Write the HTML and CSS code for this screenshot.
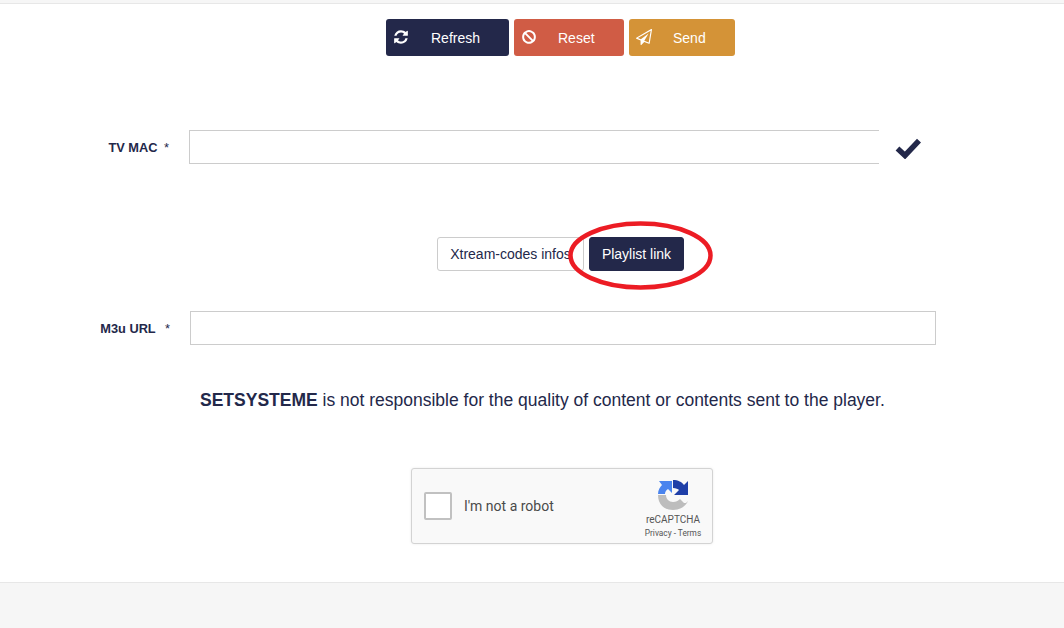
FILE: index.html
```html
<!DOCTYPE html>
<html lang="en">
<head>
  <meta charset="UTF-8" />
  <title>Upload playlist - SETSYSTEME</title>
  <link rel="stylesheet" href="styles.css">
</head>
<body>

  <div class="top-strip"></div>

  <main class="content">
    <div class="actions">
      <button type="button" class="btn btn-refresh">
        <svg class="btn-icon" viewBox="0 0 1792 1792"><path d="M1639 1056q0 5-1 7-64 268-268 434.500t-478 166.500q-146 0-282.500-55t-243.500-157l-129 129q-19 19-45 19t-45-19-19-45v-448q0-26 19-45t45-19h448q26 0 45 19t19 45-19 45l-137 137q71 66 161 102t187 36q134 0 250-65t186-179q11-17 53-117 8-23 30-23h192q13 0 22.500 9.500t9.500 22.500zm25-800v448q0 26-19 45t-45 19h-448q-26 0-45-19t-19-45 19-45l138-138q-148-137-349-137-134 0-250 65t-186 179q-11 17-53 117-8 23-30 23h-199q-13 0-22.500-9.500t-9.500-22.500v-7q65-268 270-434.500t480-166.500q146 0 284 55.500t245 156.500l130-129q19-19 45-19t45 19 19 45z"/></svg>
        Refresh
      </button>
      <button type="button" class="btn btn-reset">
        <svg class="btn-icon" viewBox="0 0 1792 1792"><path d="M1440 893q0-161-87-295l-754 753q137 89 297 89 111 0 211.500-43.500t173.500-116.500 116-174.500 43-212.500zm-999 299l755-754q-135-91-300-91-148 0-273 73t-198 199-73 274q0 162 89 299zm1223-299q0 157-61 300t-163.500 246-245 164-298.500 61-298.500-61-245-164-163.500-246-61-300 61-299.500 163.500-245.500 245-164 298.500-61 298.500 61 245 164 163.500 245.500 61 299.500z"/></svg>
        Reset
      </button>
      <button type="button" class="btn btn-send">
        <svg class="btn-icon" viewBox="0 0 1792 1792"><path d="M1764 11q33 24 27 64l-256 1536q-5 29-32 45-14 8-31 8-11 0-24-5l-527-215-298 327q-18 21-47 21-14 0-23-4-19-7-30-23.500t-11-36.500v-452l-472-193q-37-14-40-55-3-39 32-59l1664-960q35-21 68 2zm-342 1499l221-1323-1434 827 336 137 863-639-478 797z"/></svg>
        Send
      </button>
    </div>

    <div class="field field-mac">
      <label for="mac">TV MAC <span class="req">*</span></label>
      <input type="text" id="mac">
      <svg class="check" viewBox="0 0 26 21"><path d="M2.500 10.500L10 17.500L24 2.700"/></svg>
    </div>

    <div class="tabs">
      <button type="button" class="tab">Xtream-codes infos</button>
      <button type="button" class="tab tab-active">Playlist link</button>
      <svg class="circled" viewBox="0 0 146 70"><ellipse cx="72.500" cy="34.500" rx="70" ry="32"/></svg>
    </div>

    <div class="field field-url">
      <label for="url">M3u URL <span class="req">*</span></label>
      <input type="text" id="url">
    </div>

    <p class="notice"><strong>SETSYSTEME</strong> is not responsible for the quality of content or contents sent to the player.</p>

    <div class="captcha">
      <span class="captcha-box"></span>
      <span class="captcha-text">I'm not a robot</span>
      <div class="captcha-brand">
        <svg class="captcha-logo" viewBox="0 0 30 30">
          <path class="arc-grey" d="M0 15H8C8 19 11 22 15 22C18 22 20 21 22 19L26 23H28L30 21C28 26 22 30 15 30C6 30 0 24 0 15Z"/>
          <path class="arc-blue" d="M0 14C0 10 2 7 4 5L1 1H14V13L10 9C8 10 7 12 7 14Z"/>
          <path class="arc-dark" d="M15 0C20 0 24 2 26 5L30 1V15H16L21 10C20 9 18 8 15 8Z"/>
        </svg>
        <span class="captcha-name">reCAPTCHA</span>
        <span class="captcha-links">Privacy - Terms</span>
      </div>
    </div>
  </main>

  <footer class="footer"></footer>

</body>
</html>
```

FILE: styles.css
```css
* {
  box-sizing: border-box;
}

body {
  margin: 0;
  min-height: 628px;
  display: flex;
  flex-direction: column;
  font-family: "Liberation Sans", Arial, sans-serif;
  font-size: 14px;
  background: #fff;
  color: #23284a;
}

.top-strip {
  height: 4px;
  background: #f6f6f6;
  border-bottom: 1px solid #e7e7e7;
}

.content {
  flex: 1;
  display: flex;
  flex-direction: column;
}

.actions {
  display: flex;
  justify-content: flex-start;
  gap: 5px;
  margin: 15px 0 0 386px;
}

.btn {
  height: 37px;
  display: flex;
  align-items: center;
  padding: 0;
  border: none;
  border-radius: 3px;
  color: #fff;
  font: inherit;
  cursor: pointer;
}

.btn-icon {
  width: 16px;
  height: 16px;
  margin: 0 21px 2px 7px;
  fill: #fff;
}

.btn-refresh {
  width: 123px;
  background: #23284a;
}

.btn-refresh .btn-icon {
  margin-right: 22px;
}

.btn-reset {
  width: 110px;
  background: #d05c45;
}

.btn-reset .btn-icon {
  transform: scaleX(-1);
}

.btn-send {
  width: 106px;
  background: #d49337;
}

.field {
  display: flex;
  align-items: center;
}

.field label {
  padding-top: 1px;
  font-size: 12.800px;
  font-weight: bold;
  text-align: right;
}

.field input {
  height: 34px;
  border: 1px solid #ccc;
  outline: none;
  background: #fff;
}

.req {
  font-weight: normal;
  margin-left: 3px;
}

.field-mac {
  margin-top: 74px;
}

.field-mac label {
  width: 169px;
  margin-right: 20px;
}

.field-mac input {
  width: 690px;
  border-right: none;
}

.check {
  width: 26px;
  height: 21px;
  margin: 3px 0 0 16px;
  fill: none;
  stroke: #23284a;
  stroke-width: 5.500;
}

.tabs {
  position: relative;
  display: flex;
  gap: 5px;
  margin: 73px 0 0 437px;
}

.tab {
  height: 34px;
  width: 147px;
  padding: 0;
  border: 1px solid #ccc;
  border-radius: 3px;
  background: #fff;
  color: #23284a;
  font: inherit;
}

.tab-active {
  width: 95px;
  border-color: #23284a;
  background: #23284a;
  color: #fff;
}

.circled {
  position: absolute;
  left: 131px;
  top: -16px;
  width: 146px;
  height: 70px;
}

.circled ellipse {
  fill: none;
  stroke: #ec1c24;
  stroke-width: 4.500;
}

.field-url {
  margin-top: 40px;
}

.field-url label {
  width: 170px;
  margin-right: 20px;
}

.field-url .req {
  margin-left: 6px;
}

.field-url input {
  width: 746px;
}

.notice {
  margin: 44px 0 0 200px;
  font-size: 17.500px;
  line-height: 22px;
  white-space: nowrap;
}

.captcha {
  display: flex;
  align-items: center;
  width: 302px;
  height: 76px;
  margin: 57px 0 0 411px;
  padding-left: 12px;
  border: 1px solid #d3d3d3;
  border-radius: 3px;
  background: #f9f9f9;
  box-shadow: 0 0 3px rgba(0, 0, 0, 0.08);
  font-family: Roboto, sans-serif;
  color: #4a4a4a;
}

.captcha-box {
  width: 28px;
  height: 28px;
  border: 2px solid #c1c1c1;
  border-radius: 2px;
  background: #fff;
}

.captcha-text {
  margin-left: 12px;
  font-size: 14px;
}

.captcha-brand {
  width: 70px;
  margin: 5px 4px 0 auto;
  display: flex;
  flex-direction: column;
  align-items: center;
  color: #555;
}

.captcha-logo {
  width: 30px;
  height: 30px;
}

.arc-grey {
  fill: #bdbdbd;
}

.arc-blue {
  fill: #4a84ee;
}

.arc-dark {
  fill: #1f3fa8;
}

.captcha-name {
  margin-top: 4px;
  font-size: 10px;
  line-height: 12px;
}

.captcha-links {
  margin-top: 2px;
  font-size: 8.300px;
  line-height: 10px;
}

.footer {
  height: 46px;
  background: #f6f6f6;
  border-top: 1px solid #e7e7e7;
}
```
